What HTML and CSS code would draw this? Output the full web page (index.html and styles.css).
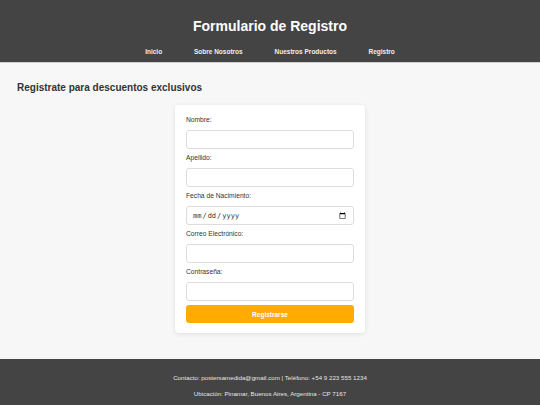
FILE: index.html
```html
<!DOCTYPE html>
<html lang="es">
<head>
    <meta charset="UTF-8">
    <meta name="viewport" content="width=device-width, initial-scale=1.0">
    <title>Formulario de Registro</title>
    <link rel="stylesheet" href="styles.css">
</head>
<body>
    <header class="site-header">
        <h1>Formulario de Registro</h1>
        <nav class="main-nav">
            <a href="#">Inicio</a>
            <a href="#">Sobre Nosotros</a>
            <a href="#">Nuestros Productos</a>
            <a href="#">Registro</a>
        </nav>
    </header>

    <main class="content">
        <h2>Registrate para descuentos exclusivos</h2>
        <form class="form-card" id="registroForm">
            <label for="nombre">Nombre:</label>
            <input type="text" id="nombre" name="nombre">

            <label for="apellido">Apellido:</label>
            <input type="text" id="apellido" name="apellido">

            <label for="fecha">Fecha de Nacimiento:</label>
            <input type="date" id="fecha" name="fecha">

            <label for="correo">Correo Electrónico:</label>
            <input type="email" id="correo" name="correo">

            <label for="clave">Contraseña:</label>
            <input type="password" id="clave" name="clave">

            <button type="submit">Registrarse</button>
        </form>
    </main>

    <footer class="site-footer">
        <p>Contacto: postersamedida@gmail.com | Teléfono: +54 9 223 555 1234</p>
        <p>Ubicación: Pinamar, Buenos Aires, Argentina - CP 7167</p>
    </footer>
</body>
</html>
```

FILE: styles.css
```css
* {
    margin: 0;
    padding: 0;
    box-sizing: border-box;
}

body {
    font-family: 'Liberation Sans', Arial, sans-serif;
    background: #f7f7f7;
    color: #333;
}

.site-header {
    background: #444;
    color: #fff;
    text-align: center;
    height: 63px;
    padding-top: 17px;
    border-bottom: 1px solid #cfcfcf;
}

.site-header h1 {
    font-size: 14px;
    line-height: 18px;
    font-weight: bold;
}

.main-nav {
    margin-top: 12px;
    font-size: 6.5px;
    line-height: 9px;
}

.main-nav a {
    color: #eee;
    text-decoration: none;
    font-weight: bold;
    margin: 0 15px;
}

.content {
    padding: 18px 17px 26px;
}

.content h2 {
    font-size: 10px;
    line-height: 13px;
    font-weight: bold;
    color: #333;
    margin-bottom: 11px;
}

.form-card {
    width: 190px;
    margin: 0 auto;
    background: #fff;
    padding: 10px 11px 10px;
    border-radius: 4px;
    box-shadow: 0 1px 5px rgba(0, 0, 0, 0.1);
}

.form-card label {
    display: block;
    font-size: 6.7px;
    line-height: 9px;
    color: #333;
    margin-bottom: 6px;
}

.form-card input {
    display: block;
    width: 100%;
    height: 19px;
    margin-bottom: 4px;
    padding: 0 5px;
    border: 1px solid #ddd;
    border-radius: 3px;
    font-size: 7px;
    font-family: 'Liberation Sans', Arial, sans-serif;
    color: #333;
}

.form-card input[type="date"] {
    font-family: 'DejaVu Sans Mono', monospace;
}

.form-card button {
    display: block;
    width: 100%;
    height: 18px;
    border: none;
    border-radius: 3px;
    background: #ffab00;
    color: #fff;
    font-family: 'Liberation Sans', Arial, sans-serif;
    font-size: 6.5px;
    font-weight: bold;
    cursor: pointer;
}

.site-footer {
    background: #444;
    color: #e6e6e6;
    text-align: center;
    padding: 15px 0 12px;
    font-size: 6.2px;
    line-height: 8px;
}

.site-footer p {
    margin-bottom: 8px;
}
```
